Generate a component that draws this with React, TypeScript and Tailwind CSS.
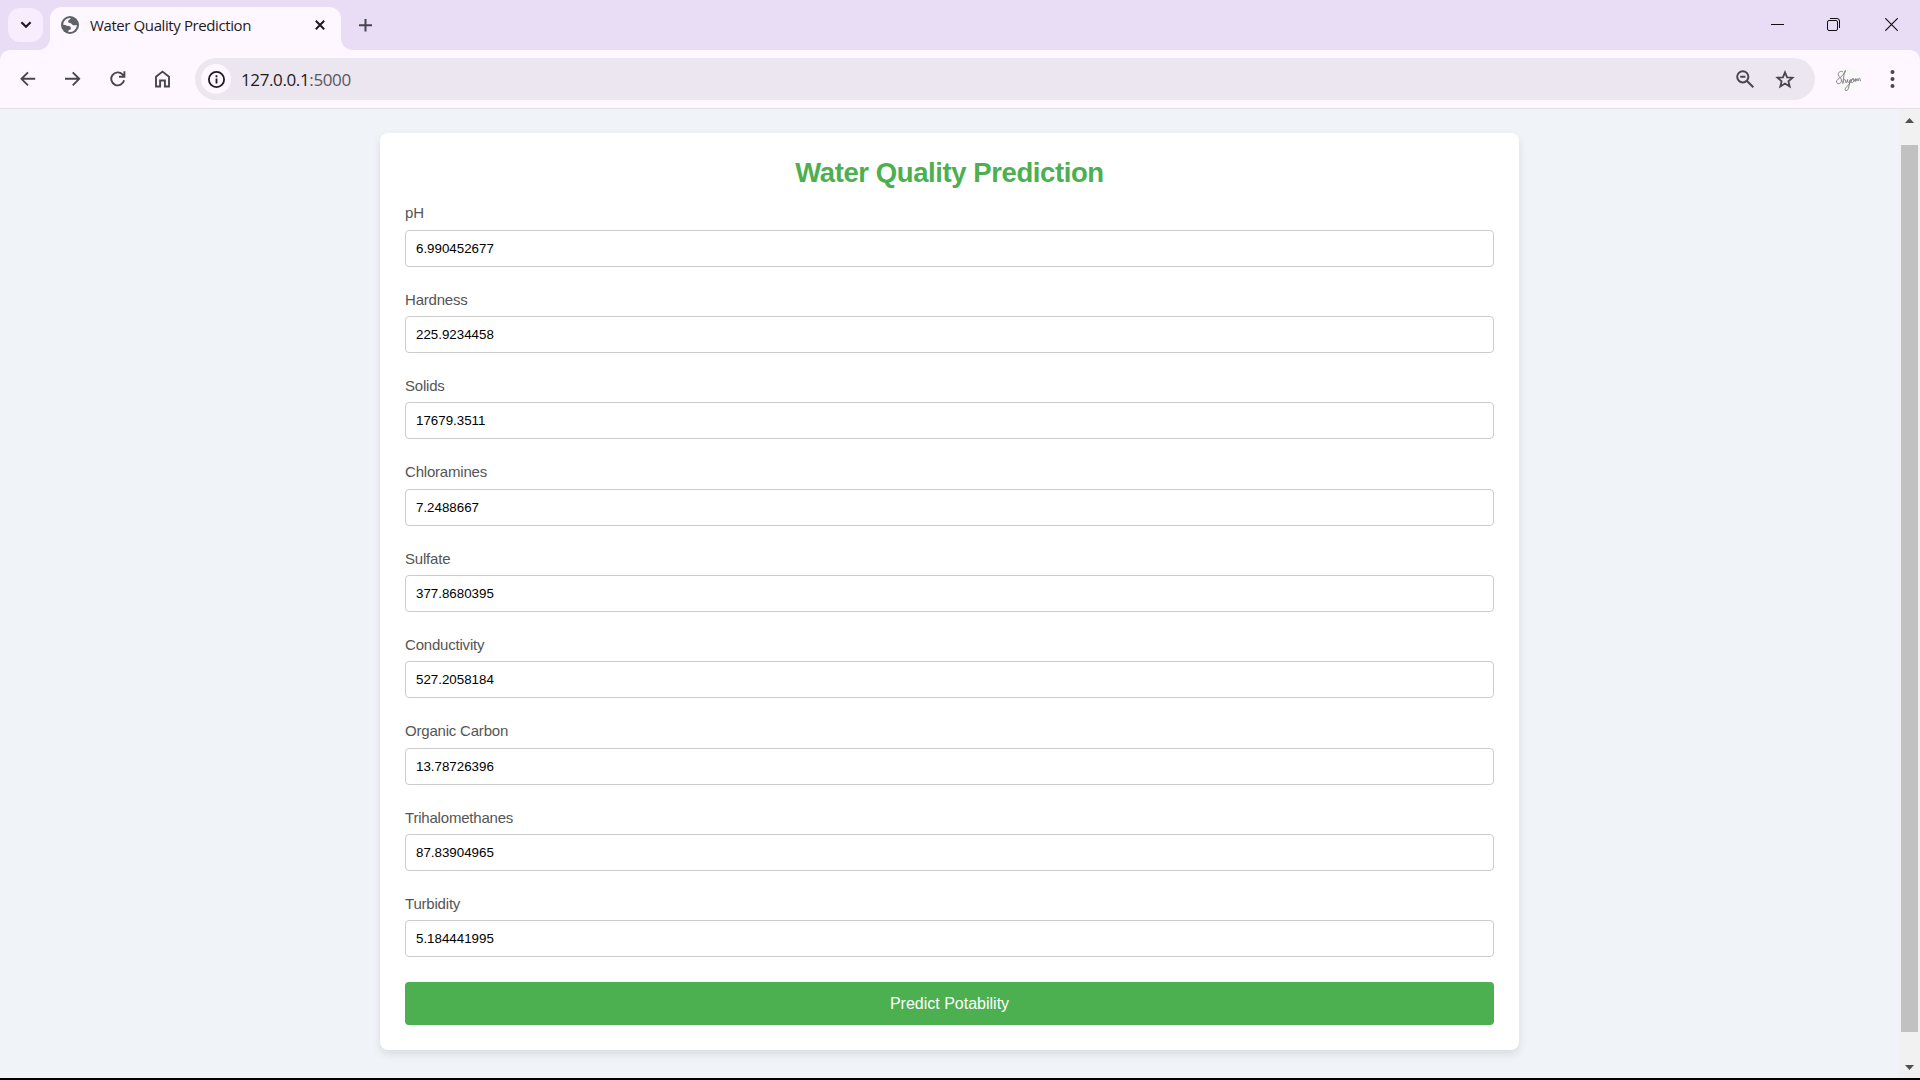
import React from "react";

const fields: { label: string; value: string; spacing: string; inner: string }[] = [
  { label: "pH", value: "6.990452677", spacing: "mt-0", inner: "mt-[7px]" },
  { label: "Hardness", value: "225.9234458", spacing: "mt-[23px]", inner: "mt-[6px]" },
  { label: "Solids", value: "17679.3511", spacing: "mt-[23px]", inner: "mt-[6px]" },
  { label: "Chloramines", value: "7.2488667", spacing: "mt-[23px]", inner: "mt-[7px]" },
  { label: "Sulfate", value: "377.8680395", spacing: "mt-[23px]", inner: "mt-[6px]" },
  { label: "Conductivity", value: "527.2058184", spacing: "mt-[23px]", inner: "mt-[6px]" },
  { label: "Organic Carbon", value: "13.78726396", spacing: "mt-[23px]", inner: "mt-[7px]" },
  { label: "Trihalomethanes", value: "87.83904965", spacing: "mt-[23px]", inner: "mt-[6px]" },
  { label: "Turbidity", value: "5.184441995", spacing: "mt-[23px]", inner: "mt-[6px]" },
];

function TabStrip() {
  return (
    <div className="relative flex h-[50px] items-start bg-[#e9ddf5]">
      <button className="ml-2 mt-2 flex h-[34px] w-[35px] items-center justify-center rounded-[12px] bg-[#f7edff]">
        <svg width="12" height="8" viewBox="0 0 12 8" fill="none" stroke="#1d1b20" strokeWidth="2.2">
          <path d="M1.4 1.2 6 5.8l4.6-4.6" />
        </svg>
      </button>
      <div className="relative ml-[7px] mt-[7px] flex h-[43px] w-[291px] items-start rounded-t-[12px] bg-[#fef7ff]">
        <svg className="absolute -left-3 bottom-0" width="12" height="12" viewBox="0 0 12 12" fill="#fef7ff">
          <path d="M12 0v12H0A12 12 0 0 0 12 0Z" />
        </svg>
        <svg className="absolute -right-3 bottom-0" width="12" height="12" viewBox="0 0 12 12" fill="#fef7ff">
          <path d="M0 0v12h12A12 12 0 0 1 0 0Z" />
        </svg>
        <svg className="ml-[11px] mt-[9px]" width="18" height="18" viewBox="0 0 18 18">
          <circle cx="9" cy="9" r="9" fill="#5f6368" />
          <path
            d="M9.800 2.100C9.800 3.600 7.600 3.500 7.300 4.800c-.3 1.300-.1 2 1.700 2.200 2 .2 2.200 2.100 3.500 2.300 1.200.2 2-.4 3.400-.3a7 7 0 0 1-8.600 6.700c0-1.200.300-1.800 1.300-2 1.300-.3 1.400-1 1.200-2-.300-1.500-1.700-1.600-3-1.700C5 9.900 4.700 8.600 2.100 8.900A6.900 6.900 0 0 1 9.800 2.100Z"
            fill="#fef7ff"
          />
        </svg>
        <span className="ml-[11px] mt-[8px] w-[200px] whitespace-nowrap font-['Open_Sans',sans-serif] text-[15px] leading-[20px] tracking-[-0.4px] text-[#1d1b20]">
          Water Quality Prediction
        </span>
        <svg className="ml-[25px] mt-[13px]" width="10" height="10" viewBox="0 0 10 10" stroke="#1d1b20" strokeWidth="2">
          <path d="m.8.8 8.400 8.400M9.200.8.800 9.200" />
        </svg>
      </div>
      <svg className="ml-[18px] mt-[19px]" width="13" height="13" viewBox="0 0 13 13" stroke="#49454f" strokeWidth="2">
        <path d="M6.500 0v12.500M0 6.200h13" />
      </svg>
      <div className="ml-auto mr-[22px] mt-[18px] flex items-center text-[#111]">
        <svg width="13" height="13" viewBox="0 0 13 13" stroke="currentColor">
          <path d="M0 6.500h13" />
        </svg>
        <svg className="ml-[43px]" width="13" height="13" viewBox="0 0 13 13" fill="none" stroke="currentColor">
          <rect x=".5" y="2.500" width="10" height="10" rx="1.500" />
          <path d="M3 .5h7a2.500 2.500 0 0 1 2.500 2.500v7" />
        </svg>
        <svg className="ml-[45px]" width="13" height="13" viewBox="0 0 13 13" stroke="currentColor" strokeWidth="1.200">
          <path d="m.3.3 12.400 12.400M12.700.3.300 12.700" />
        </svg>
      </div>
    </div>
  );
}

function Toolbar() {
  return (
    <div className="bg-[#e9ddf5]">
      <div className="flex h-[59px] items-start rounded-t-[10px] border-b border-[#e6dfe9] bg-[#fef7ff]">
        <div className="ml-5 mt-[20px] flex h-[18px] items-center text-[#49454f]">
          <svg width="16" height="16" viewBox="0 0 16 16" fill="none" stroke="currentColor" strokeWidth="1.900">
            <path d="M15.200 7.800H1.800M8 1.300 1.500 7.800 8 14.300" />
          </svg>
          <svg className="ml-[29px]" width="16" height="16" viewBox="0 0 16 16" fill="none" stroke="currentColor" strokeWidth="1.900">
            <path d="M0 7.800h13.800M7.700 1.300l6.500 6.500-6.500 6.500" />
          </svg>
          <svg className="ml-[29px]" width="16" height="16" viewBox="0 0 16 16" fill="none" stroke="currentColor" strokeWidth="1.900">
            <path d="M14.100 9.300A6.500 6.500 0 1 1 12.500 3.400l1.200 1.500M14.400.3v5.400H9" />
          </svg>
          <svg className="ml-[29px]" width="16" height="18" viewBox="0 0 16 18" fill="none" stroke="currentColor" strokeWidth="1.900">
            <path d="M1 16.500V6.800l6.500-5.200L14 6.800v9.700H9.900v-6H5.100v6Z" />
          </svg>
        </div>
        <div className="ml-[24px] mt-2 flex h-[42px] w-[1620px] items-center rounded-full bg-[#ece6f0]">
          <span className="ml-[6px] flex size-[30px] items-center justify-center rounded-full bg-[#fef7ff]">
            <svg width="17" height="17" viewBox="0 0 17 17" fill="none" stroke="#1d1b20" strokeWidth="1.800">
              <circle cx="8.500" cy="8.500" r="7.600" />
              <path d="M8.500 7.500v5M8.500 4.300v2" />
            </svg>
          </span>
          <span className="ml-[10px] mt-[2px] whitespace-nowrap font-['Open_Sans',sans-serif] text-[17px] leading-[22px] tracking-[-0.380px] text-[#1d1b20]">
            127.0.0.1<span className="text-[#5a5560]">:5000</span>
          </span>
          <svg className="ml-auto" width="18" height="18" viewBox="0 0 18 18" fill="none" stroke="#49454f" strokeWidth="2">
            <circle cx="6.800" cy="6.800" r="5.600" />
            <path d="m11 11 6.300 6.300M4.200 6.800h5.200" />
          </svg>
          <svg className="ml-[21px] mr-[20px]" width="20" height="19" viewBox="0 0 20 19" fill="none" stroke="#49454f" strokeWidth="1.800">
            <path d="m10 2.300 2.100 5 5.400.4-4.100 3.500 1.300 5.300-4.700-2.900-4.700 2.900 1.300-5.300-4.100-3.500 5.400-.4Z" />
          </svg>
        </div>
        <svg className="ml-[20px] mt-[16px]" width="26" height="26" viewBox="0 0 26 26" fill="none">
          <circle cx="13" cy="13" r="12" fill="#f8f8f8" />
          <path
            d="M8 6C6 4.500 3 6 3.200 8.500S7 12 6.500 15 2 18.500 1.500 16 6.500 12 10.500 5.500c.8-1.700-.8-1.500-1.200 1L7.800 17.500c.5-4 2.500-5.500 2.800-2.500s1 2.500 2-1.500c-.3 4 1.300 4 2.800 0l-2 9c-.7 3-4.500 2.500-3 0s5-4.500 6.300-9c1.500-2 3-.5 1.800 2s-3 1-2-1.200 3-1.300 2.600.2.500 1.300 1.700-2v3c.8-3 2-4 2.200-.5.600-3.500 2.200-4 2.400.2"
            stroke="#737377"
            strokeWidth=".85"
          />
        </svg>
        <svg className="ml-[29px] mt-[20px]" width="5" height="18" viewBox="0 0 5 18" fill="#49454f">
          <circle cx="2.500" cy="2" r="2" />
          <circle cx="2.500" cy="9" r="2" />
          <circle cx="2.500" cy="16" r="2" />
        </svg>
      </div>
    </div>
  );
}

function PredictionForm() {
  return (
    <main className="ml-[380px] mt-6 flex h-[917px] w-[1139px] flex-col rounded-[8px] bg-white px-[25px] font-['Liberation_Sans',Arial,sans-serif] shadow-[0_4px_8px_rgba(0,0,0,0.1)]">
      <h1 className="mt-[24px] h-[32px] text-center text-[27.500px] font-bold leading-[32px] tracking-[-0.410px] text-[#4caf50]">
        Water Quality Prediction
      </h1>
      <form className="mt-[14px] flex flex-col">
        {fields.map((field) => (
          <label key={field.label} className={`flex flex-col ${field.spacing}`}>
            <span className="h-[20px] self-start whitespace-nowrap text-[15px] leading-[20px] tracking-[-0.200px] text-[#555]">
              {field.label}
            </span>
            <span
              className={`flex h-[37px] items-center rounded-[4px] border border-[#ccc] px-[10px] text-[13.333px] text-black ${field.inner}`}
            >
              {field.value}
            </span>
          </label>
        ))}
        <button className="mt-[25px] h-[43px] rounded-[4px] bg-[#4caf50] text-[16px] text-white">
          Predict Potability
        </button>
      </form>
    </main>
  );
}

function Scrollbar() {
  return (
    <div className="flex w-[21px] flex-col items-center bg-[#f1f1f1]">
      <svg className="mt-[9px]" width="9" height="5" viewBox="0 0 9 5" fill="#505050">
        <path d="M0 5 4.500 0 9 5Z" />
      </svg>
      <div className="mt-[22px] h-[887px] w-[17px] bg-[#c1c1c1]" />
      <svg className="mt-[33px]" width="9" height="5" viewBox="0 0 9 5" fill="#505050">
        <path d="M0 0h9L4.500 5Z" />
      </svg>
    </div>
  );
}

export default function App() {
  return (
    <div className="flex h-[1080px] w-[1920px] flex-col overflow-hidden bg-black">
      <TabStrip />
      <Toolbar />
      <div className="flex h-[969px] justify-between bg-[#f0f4f8]">
        <PredictionForm />
        <Scrollbar />
      </div>
    </div>
  );
}
